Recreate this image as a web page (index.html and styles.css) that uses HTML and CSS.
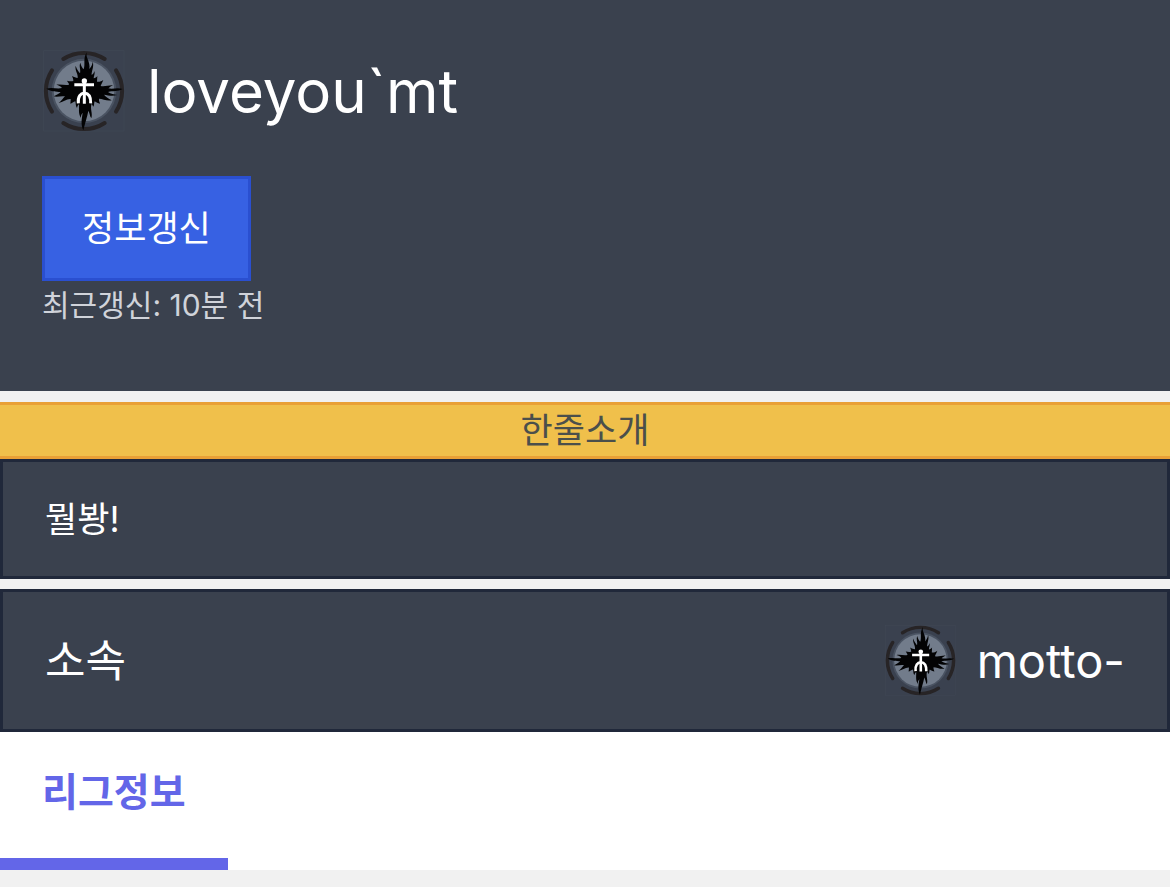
FILE: index.html
```
<!DOCTYPE html>
<html lang="ko">
<head>
    <meta charset="UTF-8">
    <meta name="viewport" content="width=device-width, initial-scale=1.0">
    <title>loveyou`mt</title>
    <link rel="stylesheet" href="styles.css">
</head>
<body>
    <!-- 길드 엠블럼 -->
    <svg class="sprite" aria-hidden="true">
        <symbol id="emblem" viewBox="-6 -6 252 252">
            <rect x="-1" y="-1" width="241" height="241" fill="#3a414f" stroke="#404855" stroke-width="2"/>
            <circle cx="120" cy="120" r="97" fill="#4a5362"/>
            <circle cx="120" cy="120" r="91" fill="#727c8b"/>
            <g fill="none" stroke="#272426" stroke-width="12" stroke-linecap="round">
                <path d="M58 24A114 114 0 0 1 182 24"/>
                <path d="M58 216A114 114 0 0 0 182 216"/>
                <path d="M24 58A114 114 0 0 0 24 182"/>
                <path d="M216 58A114 114 0 0 1 216 182"/>
            </g>
            <!-- 불꽃 -->
            <path fill="#030304" d="M128 4C124 20 140 34 136 54C141 48 145 42 146 32C151 46 142 60 143 72C147 70 150 66 151 60C154 68 149 75 149 82C154 81 157 79 160 75C160 81 159 86 159 92C166 93 173 91 178 86C176 94 171 99 170 105C182 108 194 102 207 103C200 106 196 110 193 112C208 115 220 109 236 114C222 122 206 119 192 123C200 129 211 130 219 132C205 137 192 133 180 131C186 138 196 144 203 148C188 151 176 143 165 143C164 149 167 153 168 158C162 157 157 154 152 151C149 157 152 162 148 167C146 164 145 161 143 158C137 172 147 187 142 202C137 194 137 185 133 179C130 197 123 216 118 238C109 217 114 202 116 185C112 190 110 195 111 201C102 188 106 173 105 160C101 163 100 167 99 171C94 164 96 157 94 151C88 153 84 157 79 158C80 152 80 148 80 144C68 143 57 153 44 156C53 149 57 142 63 136C50 134 40 139 29 136C38 132 45 128 50 123C36 121 22 123 7 113C24 108 40 115 54 111C50 105 44 103 37 101C52 99 64 104 75 101C75 96 71 93 69 89C76 91 82 91 88 90C88 84 86 80 84 75C90 79 96 80 101 81C103 68 92 59 95 44C98 56 104 61 108 67C111 55 104 47 109 35C111 45 115 50 119 55C125 39 116 25 128 4Z"/>
            <!-- 문양 -->
            <g fill="none" stroke="#ffffff" stroke-width="9">
                <path d="M91 101H150M121 88V158"/>
                <path d="M103 157C101 136 110 127 121 126C133 127 141 136 140 157"/>
            </g>
            <circle cx="121" cy="90" r="8" fill="#ffffff"/>
        </symbol>
    </svg>

    <!-- 플레이어 정보 -->
    <header class="profile">
        <h1 class="profile-name">
            <svg class="emblem" aria-hidden="true"><use href="#emblem"/></svg>
            <span>loveyou`mt</span>
        </h1>
        <button class="refresh-button" type="button">정보갱신</button>
        <p class="refresh-time">최근갱신: 10분 전</p>
    </header>

    <!-- 한줄소개 -->
    <section class="intro">
        <h2 class="intro-title">한줄소개</h2>
        <p class="panel intro-text">뭘봥!</p>
    </section>

    <!-- 소속 -->
    <section class="panel team">
        <h2 class="team-title">소속</h2>
        <div class="team-name">
            <svg class="emblem emblem-small" aria-hidden="true"><use href="#emblem"/></svg>
            <span>motto-</span>
        </div>
    </section>

    <nav class="tabs">
        <a href="#league" class="tab active">리그정보</a>
    </nav>
</body>
</html>
```
FILE: styles.css
```
* {
    box-sizing: border-box;
}

body {
    margin: 0;
    font-family: Inter, "Noto Sans CJK KR", sans-serif;
    font-size: 35px;
    background-color: #f1f1f1;
    color: #ffffff;
}

h1, h2, p {
    margin: 0;
    font-weight: 400;
}

.sprite {
    display: none;
}

/* 플레이어 정보 */
.profile {
    padding: 42px 42px 62px;
    background: #3a414e;
}

.profile-name {
    display: flex;
    align-items: center;
    gap: 21px;
    margin-bottom: 36px;
    font-size: 60px;
    line-height: 98px;
}

.emblem {
    width: 84px;
    height: 84px;
    flex: none;
}

.emblem-small {
    width: 73px;
    height: 73px;
}

.refresh-button {
    display: block;
    padding: 24px 37px;
    border: 3px solid #2a4fd0;
    background: #3761e3;
    color: #ffffff;
    font-family: inherit;
    font-size: 35px;
    line-height: 51px;
    cursor: pointer;
}

.refresh-time {
    color: #d0d3da;
    font-size: 30px;
    line-height: 48px;
}

/* 한줄소개 */
.intro {
    margin: 11px 0 10px;
}

.intro-title {
    border: solid #e9a036;
    border-width: 3px 0;
    background: #f0c04b;
    color: #4b4f4b;
    font-size: 35px;
    line-height: 51px;
    text-align: center;
}

.panel {
    padding: 32px 42px;
    border: 3px solid #20283a;
    background: #3a414e;
}

.intro-text {
    line-height: 50px;
}

/* 소속 */
.team {
    display: flex;
    align-items: center;
    justify-content: space-between;
}

.team-title {
    font-size: 44px;
    line-height: 64px;
}

.team-name {
    display: flex;
    align-items: center;
    gap: 20px;
    font-size: 47px;
    line-height: 70px;
}

/* 탭 */
.tabs {
    display: flex;
    background: #ffffff;
}

.tab {
    padding: 30px 42px 36px;
    color: #6366e8;
    font-size: 39px;
    font-weight: 700;
    line-height: 60px;
    text-decoration: none;
}

.tab.active {
    border-bottom: 12px solid #6366e8;
}
```
